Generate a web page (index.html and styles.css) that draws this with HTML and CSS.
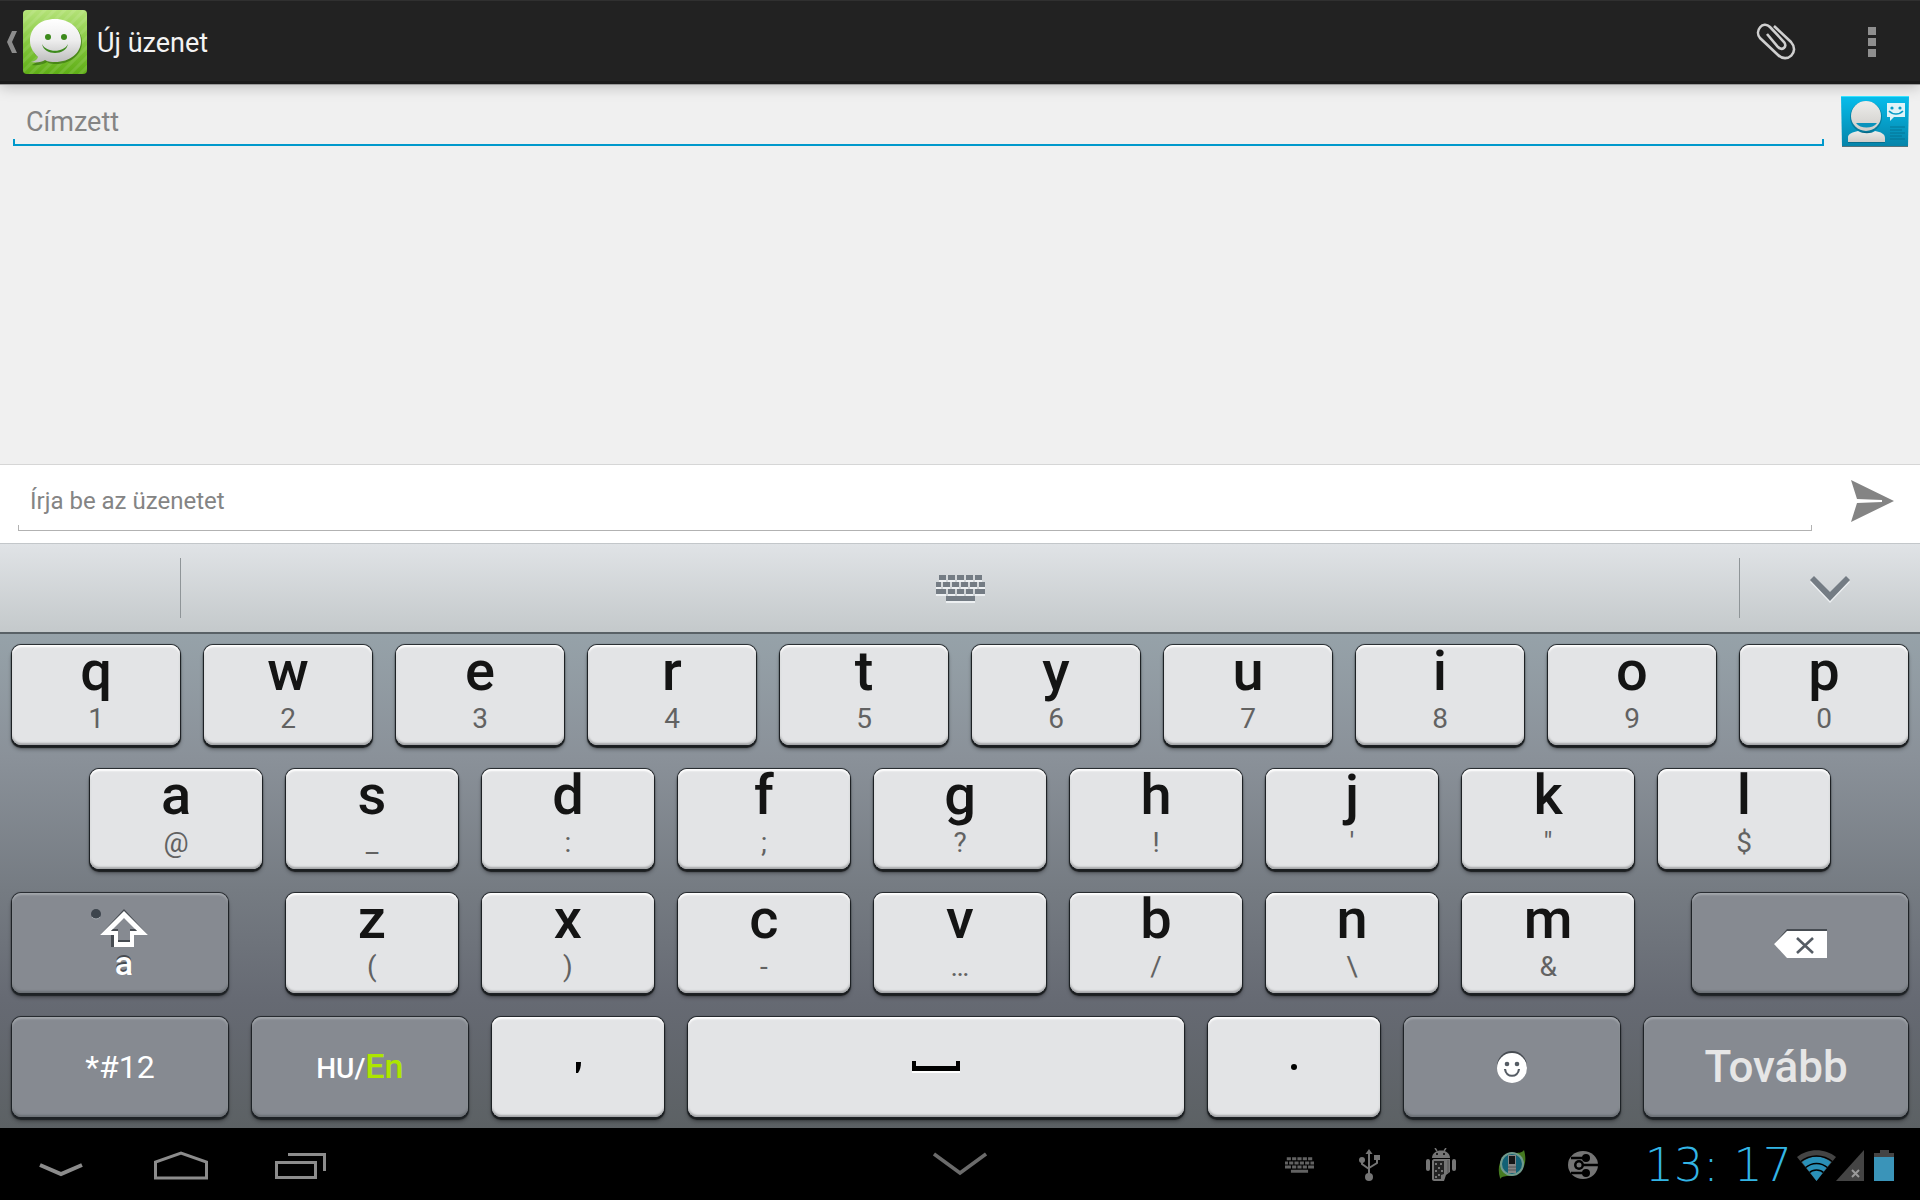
FILE: index.html
```html
<!DOCTYPE html>
<html lang="hu">
<head>
<meta charset="UTF-8" />
<meta name="viewport" content="width=device-width, initial-scale=1.0"/>
<title>Új üzenet</title>
<link rel="stylesheet" href="styles.css">
</head>
<body>

<!-- shared icon shapes -->
<svg class="defs" aria-hidden="true">
  <symbol id="kbd" viewBox="0 0 49 26">
    <path d="M3 0h7v5H3zM12 0h7v5h-7zM21 0h7v5h-7zM30 0h7v5h-7zM39 0h7v5h-7zM0 7h5v5H0zM7 7h7v5H7zM16 7h7v5h-7zM25 7h7v5h-7zM34 7h7v5h-7zM43 7h6v5h-6zM0 14h10v5H0zM12 14h7v5h-7zM21 14h7v5h-7zM30 14h7v5h-7zM39 14h10v5H39zM10 21h29v5H10z"/>
  </symbol>
</svg>

<header class="action-bar">
  <button class="up" aria-label="Vissza">
    <svg width="10" height="22" viewBox="0 0 10 22"><path d="M5 0h5L5 11l5 11H5L0 11z" fill="#8c8c8c"/></svg>
    <svg class="app-icon" width="64" height="64" viewBox="0 0 64 64">
      <defs>
        <linearGradient id="green" x1="0" y1="0" x2="0" y2="1"><stop offset="0" stop-color="#b4e278"/><stop offset="0.5" stop-color="#86c940"/><stop offset="1" stop-color="#5fae16"/></linearGradient>
        <linearGradient id="bubble" x1="0" y1="0" x2="0" y2="1"><stop offset="0" stop-color="#fff"/><stop offset="0.5" stop-color="#ededed"/><stop offset="1" stop-color="#bdbdbd"/></linearGradient>
        <pattern id="stripes" width="7" height="7" patternUnits="userSpaceOnUse" patternTransform="rotate(45)"><rect width="3" height="7" fill="#fff" opacity="0.1"/></pattern>
      </defs>
      <rect width="64" height="64" rx="4" fill="url(#green)"/>
      <rect width="64" height="64" rx="4" fill="url(#stripes)"/>
      <path d="M33 10C18 10 8 19 8 32c0 7 4 13 8 16-1 3-3 5-7 7 6 1 12-1 15-3 3 2 6 2 9 2 15 0 26-10 26-22S48 10 33 10z" fill="#2f650c" opacity="0.6"/>
      <path d="M32 9C17 9 7 18 7 31c0 7 4 12 8 16-1 3-3 4-7 5 6 1 11 0 14-2 3 2 7 2 10 2 15 0 26-9 26-21S47 9 32 9z" fill="url(#bubble)"/>
      <circle cx="25" cy="27" r="3" fill="#3c8a1c"/><circle cx="41" cy="27" r="3" fill="#3c8a1c"/>
      <path d="M19 34c4 9 22 9 26 0-2 12-24 12-26 0z" fill="#3c8a1c"/>
    </svg>
  </button>
  <h1>Új üzenet</h1>
  <button class="action" aria-label="Csatolás">
    <svg width="40" height="40" viewBox="0 0 40 40"><path d="M18 4L35 20C44 30 31 42 22 33L4 16C-2 9 7-2 14 5L28 20C32 25 26 29 22 25L11 12" fill="none" stroke="#cfcfcf" stroke-width="2.6"/></svg>
  </button>
  <button class="action" aria-label="Menü">
    <svg width="8" height="30" viewBox="0 0 8 30"><path d="M0 0h8v8H0zM0 11h8v8H0zM0 22h8v8H0z" fill="#8f8f8f"/></svg>
  </button>
</header>

<main class="conversation">
  <div class="recipient">
    <div class="field focused"><input type="text" placeholder="Címzett" aria-label="Címzett"></div>
    <button class="pick" aria-label="Névjegy választása">
      <svg width="68" height="51" viewBox="0 0 68 51">
        <defs>
          <linearGradient id="card" x1="0" y1="0" x2="0" y2="1"><stop offset="0" stop-color="#06bdec"/><stop offset="1" stop-color="#0683a8"/></linearGradient>
          <linearGradient id="head" x1="0" y1="0" x2="0" y2="1"><stop offset="0" stop-color="#ededeb"/><stop offset="1" stop-color="#cfcdc9"/></linearGradient>
        </defs>
        <path d="M0 0h68l-1 51H1z" fill="url(#card)"/>
        <path d="M0 0h68v1H0z" fill="#35e3ff"/><path d="M1 50h66v1H1z" fill="#57737c"/>
        <path d="M7 47v-5c0-4 5-5 10-6h17c6 1 10 3 10 7v4z" fill="#065e78" opacity="0.6"/>
        <circle cx="25" cy="21" r="16" fill="#065e78" opacity="0.5"/>
        <path d="M7 46v-5c0-3 5-5 10-6 5 3 13 3 17 0 6 1 10 3 10 7v4z" fill="url(#head)"/>
        <circle cx="25" cy="20" r="15" fill="url(#head)"/>
        <path d="M15 27h21c-4 6-17 6-21 0z" fill="#0a93bc"/>
        <path d="M46 7h18v14H53l-4 4v-4h-3z" fill="#dff3f8"/>
        <circle cx="51" cy="12" r="1.6" fill="#079cc6"/><circle cx="59" cy="12" r="1.6" fill="#079cc6"/>
        <path d="M48 15c4 4 10 4 14 0" fill="none" stroke="#079cc6" stroke-width="1.6"/>
        <path d="M49 31h15M49 34h12M49 37h15M49 40h12M49 43h15" stroke="#056a88" stroke-width="1.2" opacity="0.7"/>
      </svg>
    </button>
  </div>
</main>

<div class="compose">
  <div class="field"><input type="text" placeholder="Írja be az üzenetet" aria-label="Üzenet"></div>
  <button class="send" aria-label="Küldés">
    <svg width="43" height="42" viewBox="0 0 43 42"><path d="M0 0L43 21 0 42 6 23l25-1v-2L6 19z" fill="#848484"/></svg>
  </button>
</div>

<div class="suggestions">
  <div class="side"></div>
  <button class="middle" aria-label="Billentyűzet"><svg class="raised" width="49" height="26"><use href="#kbd"/></svg></button>
  <button class="side" aria-label="Elrejtés"><svg class="raised" width="40" height="26" viewBox="0 0 40 26"><path d="M4 1l16 16L36 1l4 4-20 21L0 5z"/></svg></button>
</div>

<div class="keyboard">
  <div class="row">
    <button class="key">q<span>1</span></button>
    <button class="key">w<span>2</span></button>
    <button class="key">e<span>3</span></button>
    <button class="key">r<span>4</span></button>
    <button class="key">t<span>5</span></button>
    <button class="key">y<span>6</span></button>
    <button class="key">u<span>7</span></button>
    <button class="key">i<span>8</span></button>
    <button class="key">o<span>9</span></button>
    <button class="key">p<span>0</span></button>
  </div>
  <div class="row indent">
    <button class="key">a<span>@</span></button>
    <button class="key">s<span>_</span></button>
    <button class="key">d<span>:</span></button>
    <button class="key">f<span>;</span></button>
    <button class="key">g<span>?</span></button>
    <button class="key">h<span>!</span></button>
    <button class="key">j<span>'</span></button>
    <button class="key">k<span>"</span></button>
    <button class="key">l<span>$</span></button>
  </div>
  <div class="row">
    <button class="key dark shift" aria-label="Shift">
      <svg width="80" height="40" viewBox="0 0 80 40">
        <circle cx="12" cy="5" r="5" fill="#3d454d"/><path d="M8 8a5 5 0 0 0 8 0" fill="none" stroke="#a4aab0"/>
        <path d="M40 0L16 26h11v12h20V26h17z" fill="#474c52"/>
        <path d="M40 2L16 26h14v12h20V26h14z" fill="#fff"/>
        <path d="M40 9l13 13h-7v11H34V22h-7z" fill="#868a91"/>
        <path d="M27 22l2-2h5v2zM53 22l-2-2h-5v2zM34 31h12v2H34z" fill="#474c52"/>
      </svg>
      <b>a</b>
    </button>
    <button class="key">z<span>(</span></button>
    <button class="key">x<span>)</span></button>
    <button class="key">c<span>-</span></button>
    <button class="key">v<span>…</span></button>
    <button class="key">b<span>/</span></button>
    <button class="key">n<span>\</span></button>
    <button class="key">m<span>&amp;</span></button>
    <button class="key dark backspace" aria-label="Törlés">
      <svg width="53" height="29" viewBox="0 0 53 29">
        <path d="M13 0h40v4H12L2 15l-2 0z" fill="#474c52"/>
        <path d="M13 2h40v27H13L0 15z" fill="#fff"/>
        <path d="M23 9l16 15M39 9L23 24" stroke="#555c64" stroke-width="2.6"/>
      </svg>
    </button>
  </div>
  <div class="row">
    <button class="key dark symbols">*#12</button>
    <button class="key dark lang"><span class="langs">HU/<em>En</em></span></button>
    <button class="key mark" aria-label=","><svg width="6" height="11" viewBox="0 0 6 11"><path d="M1 0h5c0 5-1 8-3 11H1z"/></svg></button>
    <button class="key mark space" aria-label="Szóköz"><svg width="48" height="12" viewBox="0 0 48 12"><path d="M0 10h48v2H0z" fill="#fff"/><path d="M0 0h4v5h40V0h4v10H0z"/></svg></button>
    <button class="key mark" aria-label="."><svg width="6" height="6" viewBox="0 0 6 6"><circle cx="3" cy="3" r="3"/></svg></button>
    <button class="key dark smile" aria-label="Hangulatjelek">
      <svg width="30" height="32" viewBox="0 0 30 32">
        <circle cx="15" cy="15" r="15" fill="#474c52"/><circle cx="15" cy="17" r="15" fill="#fff"/>
        <circle cx="10" cy="13" r="2.3" fill="#555c64"/><circle cx="20" cy="13" r="2.3" fill="#555c64"/>
        <path d="M8 18c1 9 13 9 14 0" fill="none" stroke="#555c64" stroke-width="2.2"/>
      </svg>
    </button>
    <button class="key dark next">Tovább</button>
  </div>
</div>

<footer class="system-bar">
  <nav>
    <button aria-label="Vissza"><svg width="44" height="30" viewBox="0 0 44 30"><path d="M1 15l21 9 21-9" fill="none" stroke="#8c8c8c" stroke-width="4"/></svg></button>
    <button aria-label="Kezdőlap"><svg width="54" height="30" viewBox="0 0 54 30"><path d="M1.5 28V12L27 3l25.500 9v16z" fill="none" stroke="#8c8c8c" stroke-width="3"/></svg></button>
    <button aria-label="Legutóbbiak"><svg width="52" height="30" viewBox="0 0 52 30"><path d="M1.500 12.500h39v15h-39zM13 4.500h36.500V21" fill="none" stroke="#8c8c8c" stroke-width="3"/></svg></button>
  </nav>
  <button aria-label="Elrejtés"><svg width="54" height="24" viewBox="0 0 54 24"><path d="M1 2l26 19L53 2" fill="none" stroke="#6b6b6b" stroke-width="3.500"/></svg></button>
  <div class="status">
    <span class="note"><svg width="29" height="16" fill="#626262"><use href="#kbd"/></svg></span>
    <span class="note">
      <svg width="22" height="32" viewBox="0 0 22 32" fill="#757575"><path d="M10 0l3.500 5h-7z"/><circle cx="10" cy="28" r="4"/><circle cx="3" cy="11" r="3"/><path d="M15 6h6v5h-6z"/><path d="M10 4v22M3 11v4l7 5M18 10v4l-8 5" fill="none" stroke="#757575" stroke-width="2"/></svg>
    </span>
    <span class="note">
      <svg width="30" height="34" viewBox="0 0 30 34" fill="#757575">
        <path d="M9 0l2 3M20 0l-2 3" stroke="#757575" stroke-width="1.500"/>
        <path d="M6 10C6 0 24 0 24 10z"/><circle cx="11" cy="6" r="1" fill="#000"/><circle cx="18" cy="6" r="1" fill="#000"/>
        <rect x="0" y="11" width="4" height="12" rx="2"/><rect x="26" y="11" width="4" height="12" rx="2"/>
        <path d="M8 11h16v13l-4 3-2 6H8c-1 0-2-1-2-2V13c0-1 1-2 2-2z"/>
        <path d="M8 13h10v13l-3 1v4H8z" fill="#222"/>
        <path d="M9 15h2v2H9zM14 15h2v2h-2zM12 19h2v2h-2zM15 22h2v2h-2zM9 22h2v2H9zM12 26h2v2h-2zM9 28h2v2H9z"/>
        <path d="M22 12v13" stroke="#555"/>
      </svg>
    </span>
    <span class="note">
      <svg width="28" height="30" viewBox="0 0 28 30">
        <path d="M2 28C-2 15 4 3 16 3c4 0 8 0 10-3 4 14-1 24-14 26-4 0-8 0-10 3z" fill="#457a20"/>
        <circle cx="14" cy="14" r="12" fill="#719a8d"/><circle cx="14" cy="14" r="10" fill="#126075"/>
        <path d="M10 5h8v18h-8z" fill="#858585"/><path d="M11 6h6v8h-6z" fill="#151515"/><path d="M10 17h8M10 20h8" stroke="#555"/>
      </svg>
    </span>
    <span class="note">
      <svg width="30" height="28" viewBox="0 0 30 28">
        <ellipse cx="15" cy="14" rx="15" ry="14" fill="#757575"/>
        <g fill="none" stroke="#000" stroke-width="2.500"><path d="M3 7h12M12 14h18M3 22h12"/></g>
        <circle cx="18" cy="7" r="4"/><circle cx="11" cy="14" r="5"/><circle cx="18" cy="22" r="4"/>
        <circle cx="11" cy="14" r="2.500" fill="#757575"/>
      </svg>
    </span>
    <time>13: 17</time>
    <svg width="39" height="31" viewBox="0 0 39 31">
      <defs><clipPath id="fan"><path d="M19.500 31L-1 6V-3h41v9z"/></clipPath></defs>
      <path d="M0 7C11-2 28-2 39 7L19.500 31z" fill="#444"/>
      <path d="M5 12c9-7 20-7 29 0L19.500 31z" fill="#2a90b8"/>
      <path clip-path="url(#fan)" d="M3 12c10-8 23-8 33 0M8 18c7-6 16-6 23 0M12 23c4-4 11-4 15 0" fill="none" stroke="#000" stroke-width="1.500"/>
    </svg>
    <svg width="28" height="31" viewBox="0 0 28 31"><path d="M28 0v31H0z" fill="#444"/><path d="M16 20l7 7M23 20l-7 7" stroke="#9a9a9a" stroke-width="2"/></svg>
    <svg class="battery" width="20" height="31" viewBox="0 0 20 31"><path d="M0 3h6V0h9v3h5v5H0z" fill="#444"/><path d="M0 7h20v24H0z" fill="#3a94b9"/></svg>
  </div>
</footer>

</body>
</html>
```
FILE: styles.css
```css
* {
  box-sizing: border-box;
}

body {
  margin: 0;
  min-height: 100vh;
  display: flex;
  flex-direction: column;
  font-family: Roboto, "Open Sans", sans-serif;
  background: #f0f0f0;
}

button {
  margin: 0;
  padding: 0;
  border: 0;
  background: none;
  font-family: inherit;
  color: inherit;
  display: flex;
  align-items: center;
  justify-content: center;
  cursor: pointer;
}

.defs {
  display: none;
}

/* top bar */
.action-bar {
  height: 84px;
  padding-top: 2px;
  display: flex;
  align-items: stretch;
  background: #222;
  border-top: 1px solid #303030;
  border-bottom: 3px solid #1a1a1a;
  box-shadow: 0 1px 0 #999, 0 2px 14px rgba(0, 0, 0, 0.25);
  color: #f3f3f3;
}

.up {
  gap: 6px;
  padding-left: 7px;
}

.action-bar h1 {
  flex: 1;
  align-self: center;
  margin: 0 0 0 10px;
  padding-top: 2px;
  font-size: 27px;
  font-weight: 400;
}

.action {
  width: 96px;
}

/* message area */
.conversation {
  flex: 1;
}

.recipient {
  display: flex;
  align-items: flex-start;
  gap: 17px;
  padding: 12px 11px 0 13px;
}

.field {
  flex: 1;
  display: flex;
  border-bottom: 1px solid #b2b2b2;
  background: linear-gradient(#b2b2b2, #b2b2b2) left bottom / 1px 5px no-repeat,
              linear-gradient(#b2b2b2, #b2b2b2) right bottom / 1px 5px no-repeat;
}

.field.focused {
  border-bottom: 2px solid #0099cc;
  background: linear-gradient(#0099cc, #0099cc) left bottom / 2px 5px no-repeat,
              linear-gradient(#0099cc, #0099cc) right bottom / 2px 5px no-repeat;
}

.field input {
  width: 100%;
  height: 48px;
  padding: 4px 13px 0;
  border: 0;
  outline: none;
  background: none;
  font-family: inherit;
  font-size: 27px;
  color: #222;
}

.field input::placeholder {
  color: #848484;
  opacity: 1;
}

.compose {
  display: flex;
  align-items: flex-start;
  padding: 12px 26px 12px 18px;
  gap: 39px;
  background: #fff;
  border-top: 1px solid #d6d6d6;
}

.compose .field input {
  height: 53px;
  padding: 0 12px 6px;
  font-size: 24px;
}

.send {
  padding-top: 3px;
}

/* strip above the keys */
.suggestions {
  display: flex;
  align-items: center;
  height: 91px;
  background: linear-gradient(#e0e3e6, #c4c9cb);
  border-top: 1px solid #c3c7ca;
  border-bottom: 2px solid #596166;
}

.side,
.middle {
  height: 60px;
}

.side {
  width: 180px;
}

.middle {
  flex: 1;
  border-left: 1px solid #8f9598;
  border-right: 1px solid #8f9598;
}

.raised {
  fill: #747c84;
  filter: drop-shadow(0 2px 0 #edf0f2);
}

/* keyboard */
.keyboard {
  display: flex;
  flex-direction: column;
  gap: 24px;
  padding: 11px 12px;
  background: linear-gradient(#96a2a9, #8a9199 25%, #757b82 52%, #666a73 74%, #5c6164);
}

.row {
  display: flex;
  gap: 24px;
}

.indent {
  padding: 0 78px;
}

.key {
  flex: 173 1 0;
  min-width: 0;
  height: 100px;
  flex-direction: column;
  justify-content: flex-start;
  border-radius: 9px;
  background: #e3e4e6;
  box-shadow: inset 0 2px 2px #fff, inset 0 -2px 2px #a4a6a8,
              0 0 0 1px rgba(30, 34, 37, 0.75), 0 0 1px 1px rgba(30, 34, 37, 0.6),
              0 2px 1px 1px #1b1e20, 0 4px 4px rgba(0, 0, 0, 0.4);
  color: #141414;
  font-size: 56px;
  line-height: 52px;
  font-weight: 500;
}

.key span {
  font-size: 28px;
  line-height: 32px;
  font-weight: 400;
  color: #626262;
  padding-top: 6px;
}

.key.dark {
  flex-grow: 217;
  background: #868a91;
  box-shadow: inset 0 2px 2px #a3a7ac, inset 0 -2px 2px #6c7176,
              0 0 0 1px rgba(30, 34, 37, 0.75), 0 0 1px 1px rgba(30, 34, 37, 0.5),
              0 2px 1px 1px #1f2326, 0 4px 4px rgba(0, 0, 0, 0.4);
  color: #fff;
  flex-direction: row;
  justify-content: center;
  line-height: 40px;
}

.key.shift {
  flex-direction: column;
  margin-right: 34px;
  font-size: 34px;
}

.shift svg,
.shift b {
  margin-left: 8px;
}

.shift b {
  font-weight: 500;
  line-height: 28px;
  text-shadow: 0 -2px 0 #474c52;
}

.key.backspace {
  margin-left: 34px;
}

.key.symbols {
  font-size: 32px;
  font-weight: 400;
}

.key .langs {
  padding: 0;
  font-weight: 500;
  color: #fff;
}

.langs em {
  font-style: normal;
  font-size: 34px;
  color: #ade600;
}

.key.mark {
  justify-content: center;
}

.key.space {
  flex-grow: 499;
}

.key.next {
  flex-grow: 265;
  font-size: 44px;
  color: #e6e6e6;
}

/* system bar */
.system-bar {
  height: 72px;
  display: grid;
  grid-template-columns: 1fr auto 1fr;
  background: #000;
}

.system-bar nav {
  display: flex;
  padding: 2px 0 0 1px;
}

.system-bar nav button {
  width: 120px;
}

.status {
  display: flex;
  align-items: center;
  justify-content: flex-end;
  padding: 2px 26px 0 0;
}

.note {
  width: 71px;
  display: flex;
  justify-content: center;
}

.status time {
  margin: 0 5px 0 26px;
  font-family: "DejaVu Sans Light", "DejaVu Sans", sans-serif;
  font-weight: 200;
  font-size: 46px;
  line-height: 48px;
  color: #33b5e5;
  white-space: nowrap;
}

.battery {
  margin-left: 10px;
}
```
